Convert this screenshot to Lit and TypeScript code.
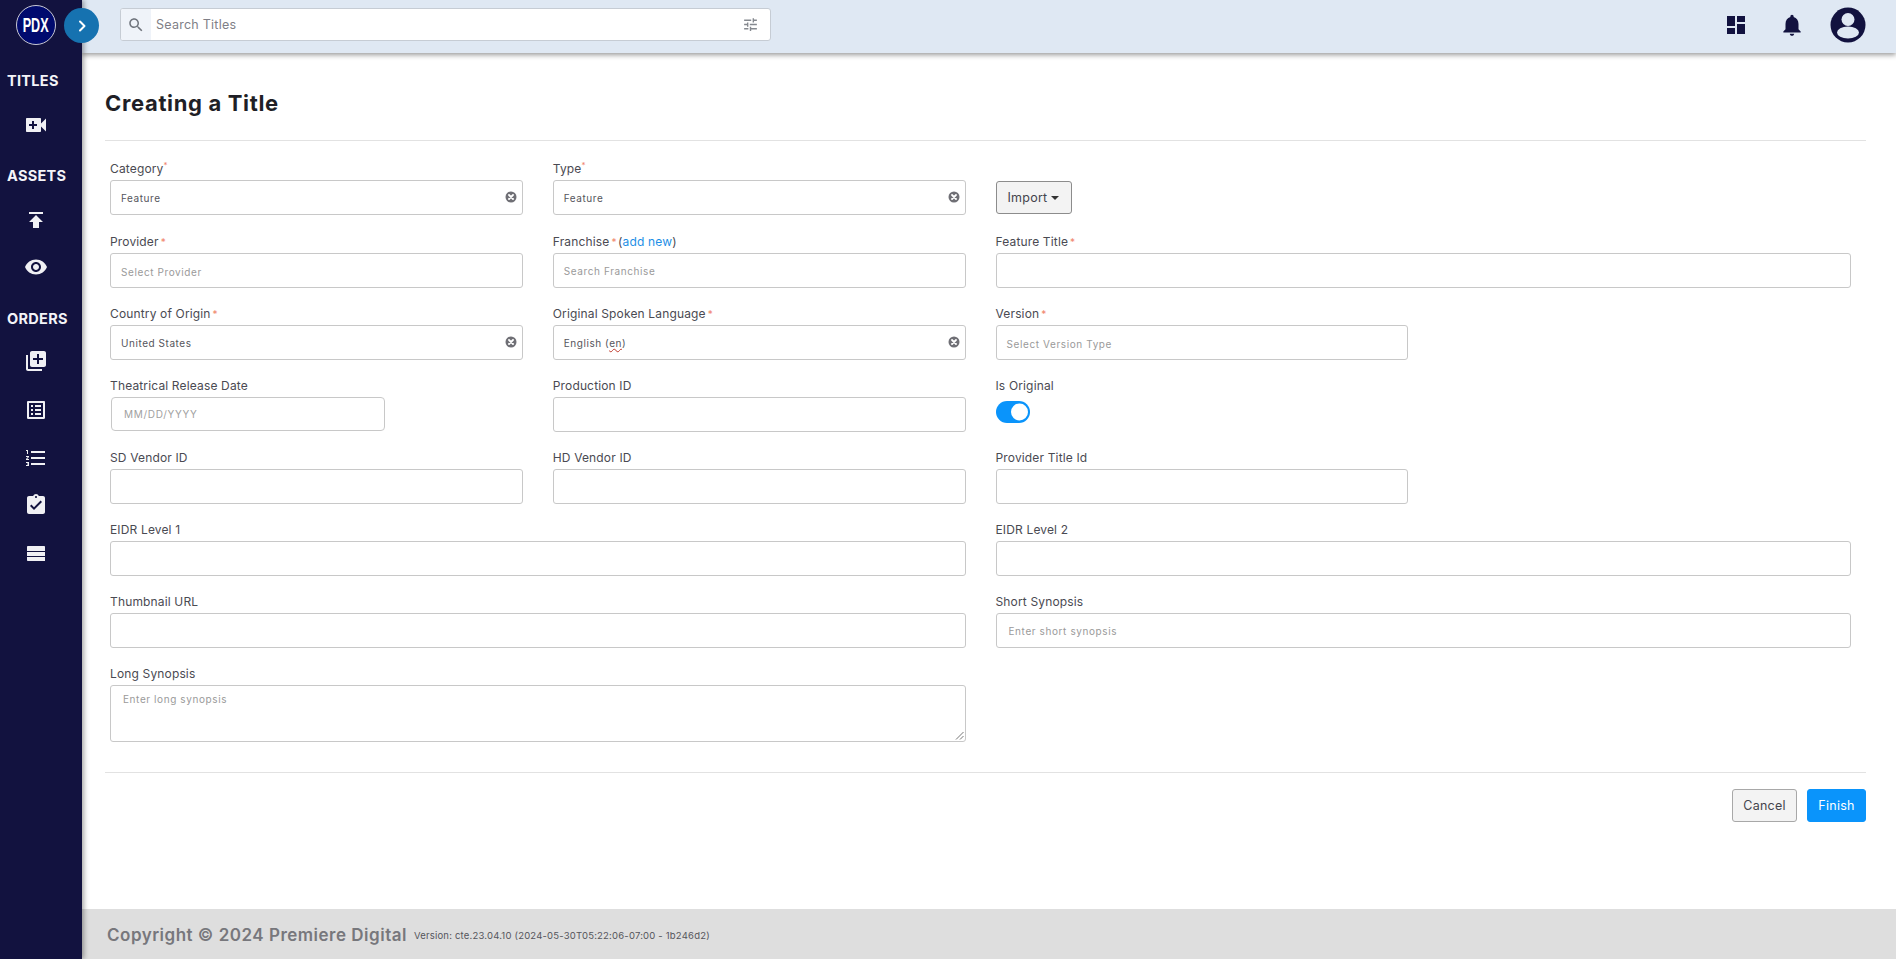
import { LitElement, html, css } from "lit";
import { customElement } from "lit/decorators.js";

type Field = { label: string; req?: "sup" | "star"; text?: string; ph?: string; clear?: boolean; span?: number; add?: boolean; spell?: string };

const M = (d: string, vb = "0 0 24 24") => html`<svg class="mi" viewBox=${vb} fill="currentColor"><path d=${d}></path></svg>`;

const ICONS = {
  video: "M17 10.5V6c0-.55-.45-1-1-1H3c-.55 0-1 .45-1 1v12c0 .55.45 1 1 1h13c.55 0 1-.45 1-1v-4.5l5 5v-13l-5 5zM13 13h-3v3H8v-3H5v-2h3V8h2v3h3v2z",
  upload: "M5 4v2h14V4H5zm0 10h4v6h6v-6h4l-7-7-7 7z",
  eye: "M12 4.5C7 4.5 2.73 7.61 1 12c1.73 4.39 6 7.5 11 7.5s9.27-3.11 11-7.5c-1.73-4.39-6-7.5-11-7.5zM12 17c-2.76 0-5-2.24-5-5s2.24-5 5-5 5 2.24 5 5-2.24 5-5 5zm0-8c-1.66 0-3 1.34-3 3s1.34 3 3 3 3-1.34 3-3-1.34-3-3-3z",
  add: "M4 6H2v14c0 1.1.9 2 2 2h14v-2H4V6zm16-4H8c-1.1 0-2 .9-2 2v12c0 1.1.9 2 2 2h12c1.1 0 2-.9 2-2V4c0-1.1-.9-2-2-2zm-1 9h-4v4h-2v-4H9V9h4V5h2v4h4v2z",
  listAlt: "M19 5v14H5V5h14m1.1-2H3.9c-.5 0-.9.4-.9.9v16.2c0 .4.4.9.9.9h16.2c.4 0 .9-.5.9-.9V3.9c0-.5-.5-.9-.9-.9zM11 7h6v2h-6V7zm0 4h6v2h-6v-2zm0 4h6v2h-6v-2zM7 7h2v2H7V7zm0 4h2v2H7v-2zm0 4h2v2H7v-2z",
  numbered: "M2 17h2v.5H3v1h1v.5H2v1h3v-4H2v1zm1-9h1V4H2v1h1v3zm-1 3h1.8L2 13.1v.9h3v-1H3.2L5 10.9V10H2v1zm5-6v2h14V5H7zm0 14h14v-2H7v2zm0-6h14v-2H7v2z",
  assign: "M19 3h-4.18C14.4 1.84 13.3 1 12 1c-1.3 0-2.4.84-2.82 2H5c-1.1 0-2 .9-2 2v14c0 1.1.9 2 2 2h14c1.1 0 2-.9 2-2V5c0-1.1-.9-2-2-2zm-7 0c.55 0 1 .45 1 1s-.45 1-1 1-1-.45-1-1 .45-1 1-1zm-2 14l-4-4 1.41-1.41L10 14.17l6.59-6.59L18 9l-8 8z",
  table: "M4 14h17v-4H3v4h1zm0 5h17v-4H3v3c0 .55.45 1 1 1zM3 5v4h18V5c0-.55-.45-1-1-1H4c-.55 0-1 .45-1 1z",
  dash: "M3 13h8V3H3v10zm0 8h8v-6H3v6zm10 0h8V11h-8v10zm0-18v6h8V3h-8z",
  bell: "M12 22c1.1 0 2-.9 2-2h-4c0 1.1.9 2 2 2zm6-6v-5c0-3.07-1.64-5.64-4.5-6.32V4c0-.83-.67-1.5-1.5-1.5s-1.5.67-1.5 1.5v.68C7.63 5.36 6 7.92 6 11v5l-2 2v1h16v-1l-2-2z",
  tune: "M3 17v2h6v-2H3zM3 5v2h10V5H3zm10 16v-2h8v-2h-8v-2h-2v6h2zM7 9v2H3v2h4v2h2V9H7zm14 4v-2H11v2h10zm-6-4h2V7h4V5h-4V3h-2v6z",
  search: "M15.5 14h-.79l-.28-.27C15.41 12.59 16 11.11 16 9.5 16 5.91 13.09 3 9.5 3S3 5.91 3 9.5 5.91 16 9.5 16c1.61 0 3.09-.59 4.23-1.57l.27.28v.79l5 4.99L20.49 19l-4.99-5zm-6 0C7.01 14 5 11.99 5 9.5S7.01 5 9.5 5 14 7.01 14 9.5 11.99 14 9.5 14z",
};

const FIELDS: Field[] = [
  { label: "Category", req: "sup", text: "Feature", clear: true },
  { label: "Type", req: "sup", text: "Feature", clear: true },
  { label: "Provider", req: "star", ph: "Select Provider" },
  { label: "Franchise", req: "star", ph: "Search Franchise", add: true },
  { label: "Feature Title", req: "star", span: 2 },
  { label: "Country of Origin", req: "star", text: "United States", clear: true },
  { label: "Original Spoken Language", req: "star", text: "English (", spell: "en", clear: true },
  { label: "Version", req: "star", ph: "Select Version Type" },
];

@customElement("app-root")
export class AppRoot extends LitElement {
  static styles = css`
    :host { display: grid; grid-template-columns: 82px 1fr; height: 100vh; min-height: 959px; overflow: hidden;
      font-family: Inter, "Open Sans", sans-serif; color: #3a3a44; background: #fff; }
    .mi { display: block; }
    .side { background: #12123f; color: #f4f4f8; display: flex; flex-direction: column; position: relative; z-index: 3;
      box-shadow: 2px 0 5px rgba(0,0,0,.35); }
    .logo-row { height: 53px; position: relative; }
    .logo { position: absolute; left: 16px; top: 5px; width: 40px; height: 40px; box-sizing: border-box; border-radius: 50%;
      background: #000a6e; border: 1.5px solid #c9c9d4; display: flex; align-items: center; justify-content: center; }
    .logo span { font: 700 21px "Liberation Sans", sans-serif; color: #fff; transform: scaleX(.6); letter-spacing: 0; }
    .toggle { position: absolute; left: 64px; top: 8px; width: 35px; height: 35px; border-radius: 50%; background: #1672b0;
      display: flex; align-items: center; justify-content: center; color: #fff; z-index: 4; }
    .toggle svg { width: 12px; height: 12px; }
    .sec { font-size: 14.5px; font-weight: 700; color: #f4f4f8; padding-left: 7px; line-height: 18px; letter-spacing: .3px; }
    .ico { display: flex; justify-content: center; color: #f0f0f4; padding-right: 10px; }
    .ico svg { width: 24px; height: 24px; }
    .s1 { margin-top: 19px; } .g1 { margin-top: 23px; }
    .s2 { margin-top: 30px; }
    .g2 { margin-top: 23px; } .g3 { margin-top: 23px; }
    .s3 { margin-top: 31px; }
    .g4 { margin-top: 21px; } .g5 { margin-top: 25px; } .g6 { margin-top: 24px; } .g7 { margin-top: 23px; } .g8 { margin-top: 25px; }

    .main { display: flex; flex-direction: column; min-width: 0; }
    .top { height: 53px; background: #dfe8f3; box-shadow: 0 2px 5px rgba(0,0,0,.4); position: relative; z-index: 2;
      display: flex; align-items: flex-start; padding: 8px 30px 0 38px; box-sizing: border-box; flex: none; }
    .search { width: 651px; height: 33px; box-sizing: border-box; background: #fff; border: 1px solid #c6ccd4; border-radius: 3px;
      display: flex; align-items: center; overflow: hidden; }
    .s-ico { width: 30px; height: 100%; background: #eff3f9; display: flex; align-items: center; justify-content: center; color: #6f747c; }
    .s-ico svg { width: 18px; height: 18px; }
    .s-text { flex: 1; padding-left: 5px; font-size: 12.5px; color: #7f7f87; letter-spacing: .25px; }
    .tune { color: #85898f; width: 17px; height: 17px; margin-right: 11px; }
    .top-r { margin-left: auto; display: flex; align-items: center; color: #12123f; height: 34px; }
    .top-r .d { width: 18px; height: 18px; }
    .top-r .b { width: 26px; height: 26px; margin-left: 34px; }
    .top-r .a { width: 40px; height: 40px; margin-left: 23px; margin-right: -2px; }

    .content { flex: 1; padding: 0 30px 0 23px; min-height: 0; }
    h1 { margin: 0; height: 87px; box-sizing: border-box; padding-top: 37px; font-size: 22px; line-height: 27px; font-weight: 700; color: #1f1f26; letter-spacing: .65px; }
    .rule { height: 1px; background: #e2e2e2; }
    .form { display: grid; grid-template-columns: repeat(4, 1fr); column-gap: 30px; row-gap: 19px; padding: 21px 15px 0 5px; }
    .f { min-width: 0; }
    .first { margin-bottom: 1px; }
    .lab { height: 17px; padding-bottom: 1px; margin-top: -1px; margin-bottom: 1px; font-size: 12px; line-height: 15px; color: #4a4a52; white-space: nowrap; letter-spacing: .15px; }
    .lab .st { color: #f0846a; margin-left: 2px; font-size: 10px; }
    .lab sup { color: #f0846a; font-size: 8px; line-height: 0; margin-left: 0; }
    .lab a { color: #1d8fe6; }
    .lab .open { margin-left: -2px; }
    .in { position: relative; height: 35px; box-sizing: border-box; border: 1px solid #c8c8c8; border-radius: 3px; background: #fff;
      padding: 0 10px; font-size: 10px; letter-spacing: .55px; line-height: 35px; color: #55555c; white-space: nowrap; }
    .in.ph { color: #9a9a9a; line-height: 34px; letter-spacing: .6px; }
    .in.ph.sel { line-height: 36px; }
    .in.syn { padding-left: 12px; }
    .in.ph.ta { height: 57px; line-height: 12px; padding: 7px 12px; }
    .spell { text-decoration: underline wavy #c0392b 1px; }
    .x { position: absolute; right: 5px; top: 10px; width: 12px; height: 12px; }
    .w2 { grid-column: span 2; }
    .date { width: 274px; height: 34px; box-sizing: border-box; margin-left: 1px; border: 1px solid #c8c8c8; border-radius: 4px; padding: 0 12px; font-size: 10px; line-height: 32px; letter-spacing: .7px; color: #9f9f9f; }
    .sw { width: 34px; height: 22px; display: block; margin-top: 5px; }
    .import { display: flex; align-items: flex-end; }
    .btn { box-sizing: border-box; height: 33px; border-radius: 3px; border: 1px solid #8c8c8c; background: #f3f3f3; color: #44444c; font-size: 12.5px;
      display: inline-flex; align-items: center; justify-content: center; letter-spacing: .25px; }
    .imp { width: 76px; margin-bottom: 1px; gap: 4px; }
    .caret { width: 0; height: 0; border-left: 4px solid transparent; border-right: 4px solid transparent; border-top: 4px solid #333; }
    .grip { position: absolute; right: 1px; bottom: 1px; width: 9px; height: 9px; }
    .rule2 { margin-top: 30px; }
    .acts { display: flex; justify-content: flex-end; gap: 10px; margin-top: 16px; }
    .cancel { width: 65px; border-color: #a8a8a8; }
    .finish { width: 59px; background: #0a94fb; border-color: #0a94fb; color: #fff; }
    .foot { flex: none; height: 50px; background: #dedede; display: flex; align-items: center; padding-left: 25px; padding-top: 1px; box-sizing: border-box; }
    .foot b { font-size: 17px; font-weight: 600; color: #77777c; letter-spacing: .5px; }
    .foot span { font-size: 9.5px; color: #55555c; margin-left: 7px; padding-top: 1px; letter-spacing: .2px; }
  `;

  private lab(f: Field) {
    return html`<div class="lab">${f.label}${f.req === "sup" ? html`<sup>*</sup>` : f.req === "star" ? html`<span class="st">*</span>` : ""}${f.add ? html` <span class="open">(<a>add new</a>)</span>` : ""}</div>`;
  }

  private clear() {
    return html`<svg class="x" viewBox="0 0 12 12"><circle cx="6" cy="6" r="5.5" fill="#6f6f75"></circle><path d="M4 4l4 4M8 4l-4 4" stroke="#fff" stroke-width="1.8" stroke-linecap="round"></path></svg>`;
  }

  private field(f: Field, first = false) {
    return html`<div class="f ${f.span ? "w2" : ""} ${first ? "first" : ""}">
      ${this.lab(f)}
      <div class="in ${f.ph ? "ph" : ""} ${f.ph && f.ph.startsWith("Select") ? "sel" : ""}">${f.text ?? f.ph ?? ""}${f.spell ? html`<span class="spell">${f.spell}</span>)` : ""}${f.clear ? this.clear() : ""}</div>
    </div>`;
  }

  private simple(label: string, span = false) {
    return html`<div class="f ${span ? "w2" : ""}"><div class="lab">${label}</div><div class="in"></div></div>`;
  }

  render() {
    return html`
      <nav class="side">
        <div class="logo-row">
          <div class="logo"><span>PDX</span></div>
          <div class="toggle"><svg viewBox="0 0 12 12" fill="none" stroke="currentColor" stroke-width="2" stroke-linecap="round" stroke-linejoin="round"><path d="M4 1.5L8.5 6 4 10.5"></path></svg></div>
        </div>
        <div class="sec s1">TITLES</div>
        <div class="ico g1">${M(ICONS.video)}</div>
        <div class="sec s2">ASSETS</div>
        <div class="ico g2">${M(ICONS.upload)}</div>
        <div class="ico g3">${M(ICONS.eye)}</div>
        <div class="sec s3">ORDERS</div>
        <div class="ico g4">${M(ICONS.add)}</div>
        <div class="ico g5">${M(ICONS.listAlt)}</div>
        <div class="ico g6">${M(ICONS.numbered)}</div>
        <div class="ico g7">${M(ICONS.assign)}</div>
        <div class="ico g8">${M(ICONS.table)}</div>
      </nav>
      <div class="main">
        <header class="top">
          <div class="search">
            <div class="s-ico">${M(ICONS.search)}</div>
            <div class="s-text">Search Titles</div>
            <svg class="tune" viewBox="0 0 24 24" fill="currentColor"><path d=${ICONS.tune}></path></svg>
          </div>
          <div class="top-r">
            <svg class="d" viewBox="3 3 18 18" fill="currentColor"><path d=${ICONS.dash}></path></svg>
            <svg class="b" viewBox="0 0 24 24" fill="currentColor"><path d=${ICONS.bell}></path></svg>
            <svg class="a" viewBox="0 0 40 40"><circle cx="20" cy="20" r="17.5" fill="currentColor"></circle><circle cx="20" cy="14.5" r="6.5" fill="#dfe8f3"></circle><ellipse cx="20" cy="27.5" rx="11" ry="6" fill="#dfe8f3"></ellipse></svg>
          </div>
        </header>
        <div class="content">
          <h1>Creating a Title</h1>
          <div class="rule"></div>
          <div class="form">
            ${this.field(FIELDS[0], true)}
            ${this.field(FIELDS[1], true)}
            <div class="f import first"><div class="btn imp">Import <i class="caret"></i></div></div>
            <div></div>
            ${this.field(FIELDS[2])}
            ${this.field(FIELDS[3])}
            ${this.field(FIELDS[4])}
            ${this.field(FIELDS[5])}
            ${this.field(FIELDS[6])}
            ${this.field(FIELDS[7])}
            <div></div>
            <div class="f"><div class="lab">Theatrical Release Date</div><div class="date">MM/DD/YYYY</div></div>
            ${this.simple("Production ID")}
            <div class="f"><div class="lab">Is Original</div>
              <svg class="sw" viewBox="0 0 34 22"><rect x="0" y="0" width="34" height="22" rx="11" fill="#0a94fb"></rect><circle cx="23.5" cy="11" r="8.5" fill="#fff"></circle></svg>
            </div>
            <div></div>
            ${this.simple("SD Vendor ID")}
            ${this.simple("HD Vendor ID")}
            ${this.simple("Provider Title Id")}
            <div></div>
            ${this.simple("EIDR Level 1", true)}
            ${this.simple("EIDR Level 2", true)}
            ${this.simple("Thumbnail URL", true)}
            <div class="f w2"><div class="lab">Short Synopsis</div><div class="in ph syn">Enter short synopsis</div></div>
            <div class="f w2"><div class="lab">Long Synopsis</div>
              <div class="in ph ta">Enter long synopsis
                <svg class="grip" viewBox="0 0 9 9" fill="none" stroke="#777" stroke-width="1"><path d="M8.5 1L1 8.5M8.5 5L5 8.5"></path></svg>
              </div>
            </div>
          </div>
          <div class="rule rule2"></div>
          <div class="acts"><div class="btn cancel">Cancel</div><div class="btn finish">Finish</div></div>
        </div>
        <footer class="foot"><b>Copyright © 2024 Premiere Digital</b><span>Version: cte.23.04.10 (2024-05-30T05:22:06-07:00 - 1b246d2)</span></footer>
      </div>
    `;
  }
}
